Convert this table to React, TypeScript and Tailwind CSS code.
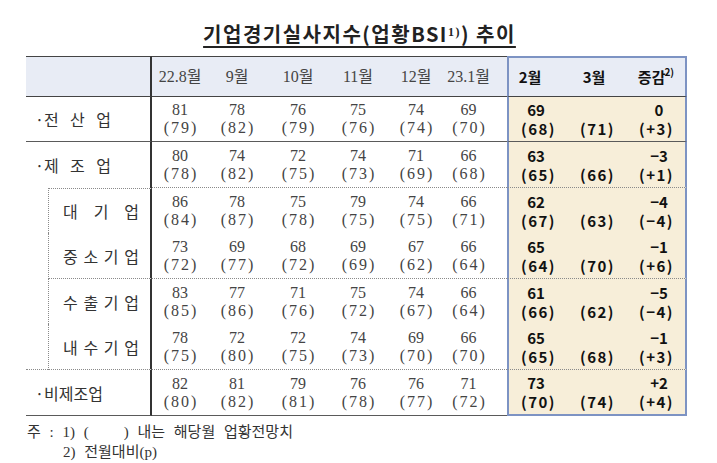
import React from "react";

type Row = {
  label: string[];
  sub?: boolean;
  vals: [string, string][];
  feb: [string, string];
  mar: string;
  diff: [string, string];
  h: string;
  line: "solid" | "mfg" | "none" | "dot" | "dotfull" | "last";
  topDot?: boolean;
};

const rows: Row[] = [
  {
    label: ["·전", "산", "업"],
    vals: [["81", "(79)"], ["78", "(82)"], ["76", "(79)"], ["75", "(76)"], ["74", "(74)"], ["69", "(70)"]],
    feb: ["69", "(68)"],
    mar: "(71)",
    diff: ["0", "(+3)"],
    h: "h-[45px]",
    line: "solid",
  },
  {
    label: ["·제", "조", "업"],
    vals: [["80", "(78)"], ["74", "(82)"], ["72", "(75)"], ["74", "(73)"], ["71", "(69)"], ["66", "(68)"]],
    feb: ["63", "(65)"],
    mar: "(66)",
    diff: ["−3", "(+1)"],
    h: "h-[46px]",
    line: "mfg",
  },
  {
    label: ["대", "기", "업"],
    sub: true,
    topDot: true,
    vals: [["86", "(84)"], ["78", "(87)"], ["75", "(78)"], ["79", "(75)"], ["74", "(75)"], ["66", "(71)"]],
    feb: ["62", "(67)"],
    mar: "(63)",
    diff: ["−4", "(−4)"],
    h: "h-[45px]",
    line: "none",
  },
  {
    label: ["중", "소", "기", "업"],
    sub: true,
    vals: [["73", "(72)"], ["69", "(77)"], ["68", "(72)"], ["69", "(69)"], ["67", "(62)"], ["66", "(64)"]],
    feb: ["65", "(64)"],
    mar: "(70)",
    diff: ["−1", "(+6)"],
    h: "h-[46px]",
    line: "dot",
  },
  {
    label: ["수", "출", "기", "업"],
    sub: true,
    vals: [["83", "(85)"], ["77", "(86)"], ["71", "(76)"], ["75", "(72)"], ["74", "(67)"], ["66", "(64)"]],
    feb: ["61", "(66)"],
    mar: "(62)",
    diff: ["−5", "(−4)"],
    h: "h-[45px]",
    line: "none",
  },
  {
    label: ["내", "수", "기", "업"],
    sub: true,
    vals: [["78", "(75)"], ["72", "(80)"], ["72", "(75)"], ["74", "(73)"], ["69", "(70)"], ["66", "(70)"]],
    feb: ["65", "(65)"],
    mar: "(68)",
    diff: ["−1", "(+3)"],
    h: "h-[46px]",
    line: "dotfull",
  },
  {
    label: ["·비제조업"],
    vals: [["82", "(80)"], ["81", "(82)"], ["79", "(81)"], ["76", "(78)"], ["76", "(77)"], ["71", "(72)"]],
    feb: ["73", "(70)"],
    mar: "(74)",
    diff: ["+2", "(+4)"],
    h: "h-[46px]",
    line: "last",
  },
];

const monthW = ["w-[56px]", "w-[58px]", "w-[64px]", "w-[56px]", "w-[60px]", "w-[61px] pr-[16px]"];
const months = ["22.8월", "9월", "10월", "11월", "12월", "23.1월"];

const SOLID = "border-b border-b-[#5a5a5a]";
const DOT = "border-b [border-bottom-style:dotted] border-b-[#8a8a8a]";

function bottomFor(line: Row["line"]) {
  if (line === "solid" || line === "last") return SOLID;
  if (line === "dot" || line === "dotfull") return DOT;
  return "";
}

function Label({ row }: { row: Row }) {
  const bottom = row.line === "mfg" ? "" : bottomFor(row.line);
  if (!row.sub) {
    return (
      <div className={`w-[126px] shrink-0 flex items-center pl-[9px] border-r-2 border-r-[#333] ${bottom}`}>
        <div className={`flex ${row.label.length > 1 ? "w-[76px] justify-between" : ""} text-[16px] text-[#333]`}>
          {row.label.map((t, i) => (
            <span key={i}>{t}</span>
          ))}
        </div>
      </div>
    );
  }
  return (
    <div className="w-[126px] shrink-0 flex">
      <div className={`w-[22px] ${row.line === "dotfull" ? DOT : ""}`} />
      <div
        className={`w-[104px] flex items-center pl-[14px] border-r-2 border-r-[#333] border-l [border-left-style:dotted] border-l-[#8a8a8a] ${bottom} ${
          row.topDot ? "border-t [border-top-style:dotted] border-t-[#8a8a8a]" : ""
        }`}
      >
        <div className="flex w-[76px] justify-between text-[16px] text-[#333]">
          {row.label.map((t, i) => (
            <span key={i}>{t}</span>
          ))}
        </div>
      </div>
    </div>
  );
}

function DataRow({ row }: { row: Row }) {
  const bottom = row.line === "mfg" ? DOT : bottomFor(row.line);
  const hlBottom = row.line === "last" ? "border-b-2 border-b-[#7d93c3]" : bottom;
  return (
    <div className={`flex ${row.h}`}>
      <Label row={row} />
      <div className={`flex w-[355px] shrink-0 ${bottom} font-['Liberation_Serif','Noto_Sans_CJK_KR',serif] text-[16px] leading-[18px] text-[#444]`}>
        {row.vals.map((v, i) => (
          <div key={i} className={`${monthW[i]} flex flex-col items-center justify-center`}>
            <span>{v[0]}</span>
            <span className="tracking-[2px] pl-[2px]">{v[1]}</span>
          </div>
        ))}
      </div>
      <div
        className={`flex w-[180px] shrink-0 bg-[#f7eed9] border-x-2 border-x-[#7d93c3] ${hlBottom} font-['Noto_Sans_CJK_KR',sans-serif] font-bold text-[15px] leading-[19px] text-[#111]`}
      >
        <div className="w-[58px] flex flex-col items-center justify-center">
          <span className="pr-[4px]">{row.feb[0]}</span>
          <span className="tracking-[1.5px] pl-[1px]">{row.feb[1]}</span>
        </div>
        <div className="w-[60px] flex flex-col items-center justify-center">
          <span>&nbsp;</span>
          <span className="tracking-[1.5px] pl-[1px]">{row.mar}</span>
        </div>
        <div className="w-[58px] flex flex-col items-center justify-center">
          <span className="pl-[6px]">{row.diff[0]}</span>
          <span className="tracking-[1.5px] pl-[1px]">{row.diff[1]}</span>
        </div>
      </div>
    </div>
  );
}

export default function App() {
  return (
    <div className="w-[717px] h-[463px] bg-white font-['Noto_Sans_CJK_KR',sans-serif] overflow-hidden">
      <div className="pt-[22px] flex justify-center">
        <h1 className="h-[24px] leading-[24px] text-[20px] font-semibold text-[#222] tracking-[1.5px] underline underline-offset-[4px] decoration-[1.5px] ml-[2px]">
          기업경기실사지수(업황BSI<sup className="text-[12px] font-['Liberation_Serif',serif]">1)</sup>) 추이
        </h1>
      </div>

      <div className="ml-[26px] mt-[10px] w-[661px]">
        {/* header */}
        <div className="flex h-[41px]">
          <div className="w-[126px] shrink-0 bg-[#e8ecf5] border-t border-t-[#444] border-b border-b-[#444] border-r-2 border-r-[#333]" />
          <div className="flex w-[355px] shrink-0 bg-[#e8ecf5] border-t border-t-[#444] border-b border-b-[#444] font-['Liberation_Serif','Noto_Sans_CJK_KR',serif] text-[16px] text-[#444]">
            {months.map((m, i) => (
              <div key={i} className={`${monthW[i]} flex items-center justify-center`}>
                {m}
              </div>
            ))}
          </div>
          <div className="flex w-[180px] shrink-0 bg-[#e8ecf5] border-t-2 border-t-[#7d93c3] border-x-2 border-x-[#7d93c3] border-b border-b-[#444] font-bold text-[15px] text-[#111]">
            <div className="w-[58px] flex items-center justify-center pr-[16px]">2월</div>
            <div className="w-[60px] flex items-center justify-center pr-[6px]">3월</div>
            <div className="w-[58px] flex items-center justify-center">
              증감<sup className="text-[10px] -ml-[1px]">2)</sup>
            </div>
          </div>
        </div>
        {rows.map((r, i) => (
          <DataRow key={i} row={r} />
        ))}
      </div>

      <div className="pt-[6px] pl-[27px] text-[15px] leading-[20px] text-[#333] font-['Liberation_Serif','Noto_Sans_CJK_KR',serif] whitespace-pre [word-spacing:5px]">
        <div>주 : 1) (    ) 내는 해당월 업황전망치</div>
        <div className="pl-[36px]">2) 전월대비(p)</div>
      </div>
    </div>
  );
}
